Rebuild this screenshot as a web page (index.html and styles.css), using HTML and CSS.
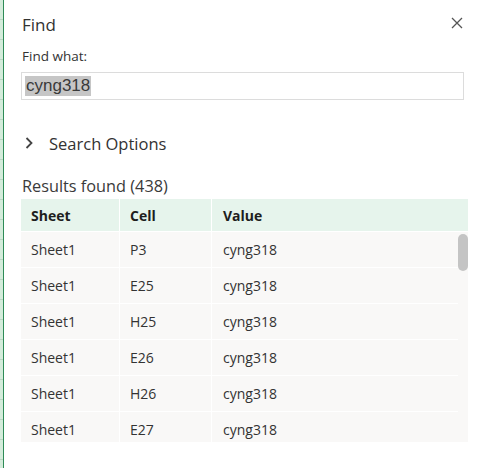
FILE: index.html
```html
<!DOCTYPE html>
<html>
<head>
<meta charset="utf-8">
<link rel="stylesheet" href="styles.css">
</head>
<body>
<div class="app">
  <div class="sheet-edge"></div>
  <div class="panel">
    <div class="title-row">
      <div class="title">Find</div>
      <button class="close" aria-label="Close">
        <svg width="12" height="12" viewBox="0 0 12 12"><path d="M1 1 L11 11 M11 1 L1 11" stroke="#555" stroke-width="1.3" fill="none"/></svg>
      </button>
    </div>
    <label class="label">Find what:</label>
    <div class="input"><span class="sel">cyng318</span></div>
    <div class="options">
      <svg class="chev" width="10" height="14" viewBox="0 0 10 14"><path d="M2.5 2 L7.5 7 L2.5 12" stroke="#444" stroke-width="1.8" fill="none"/></svg>
      <span>Search Options</span>
    </div>
    <div class="results-title">Results found (438)</div>
    <div class="table">
      <div class="row head">
        <div class="c c1">Sheet</div>
        <div class="c c2">Cell</div>
        <div class="c c3">Value</div>
      </div>
      <div class="body">
        <div class="rows">
          <div class="row"><div class="c c1">Sheet1</div><div class="c c2">P3</div><div class="c c3">cyng318</div></div>
          <div class="row"><div class="c c1">Sheet1</div><div class="c c2">E25</div><div class="c c3">cyng318</div></div>
          <div class="row"><div class="c c1">Sheet1</div><div class="c c2">H25</div><div class="c c3">cyng318</div></div>
          <div class="row"><div class="c c1">Sheet1</div><div class="c c2">E26</div><div class="c c3">cyng318</div></div>
          <div class="row"><div class="c c1">Sheet1</div><div class="c c2">H26</div><div class="c c3">cyng318</div></div>
          <div class="row"><div class="c c1">Sheet1</div><div class="c c2">E27</div><div class="c c3">cyng318</div></div>
        </div>
        <div class="thumb"></div>
      </div>
    </div>
  </div>
</div>
</body>
</html>
```
FILE: styles.css
```css
html, body {
  margin: 0;
  padding: 0;
  background: #fff;
}
body {
  font-family: "Open Sans", "Noto Sans", sans-serif;
  color: #242424;
}
.app {
  display: flex;
  width: 477px;
  height: 468px;
  overflow: hidden;
}
.sheet-edge {
  width: 3px;
  flex: none;
  background: repeating-linear-gradient(to bottom, #d4ecdb 0, #d4ecdb 19px, #b9d6c2 19px, #b9d6c2 20px);
  border-right: 1.5px solid #2e8b57;
}
.panel {
  flex: 1;
  padding: 0 9px 0 17px;
  display: flex;
  flex-direction: column;
}
.title-row {
  display: flex;
  justify-content: space-between;
  align-items: center;
  height: 24px;
  margin-top: 12px;
}
.title {
  font-size: 17px;
  color: #323232;
  padding-left: 1px;
}
.close {
  border: none;
  background: none;
  padding: 0;
  margin-right: 5px;
  margin-top: -3px;
  width: 12px;
  height: 12px;
  display: flex;
}
.label {
  font-size: 13.5px;
  margin-top: 11px;
  color: #333;
  padding-left: 1px;
  line-height: 18px;
}
.input {
  margin-top: 7px;
  box-sizing: border-box;
  width: 443px;
  height: 28px;
  border: 1px solid #dcdcdc;
  display: flex;
  align-items: center;
  padding-left: 3px;
}
.sel {
  font-family: "Liberation Sans", Arial, sans-serif;
  font-size: 17px;
  background: #c6c6c6;
  color: #3a3a3a;
  line-height: 20px;
  padding: 0 1px;
}
.options {
  display: flex;
  align-items: center;
  margin-top: 32px;
  height: 22px;
  font-size: 16.5px;
  color: #333;
}
.chev {
  margin-left: 3px;
  margin-right: 15px;
}
.results-title {
  margin-top: 21px;
  font-size: 16.3px;
  color: #3a3a3a;
  line-height: 22px;
  padding-left: 1px;
}
.table {
  margin-top: 2px;
  width: 447px;
  font-size: 14px;
  display: flex;
  flex-direction: column;
}
.row {
  display: flex;
  height: 36px;
  flex: none;
}
.row.head {
  height: 32px;
  background: #e6f4ec;
  font-weight: 700;
  color: #1e1e1e;
  border-bottom: 1px solid #fff;
}
.c {
  display: flex;
  align-items: center;
  padding-left: 10px;
  box-sizing: border-box;
}
.c1 { width: 99px; border-right: 1px solid #fff; }
.c2 { width: 92px; border-right: 1px solid #fff; padding-left: 10px; }
.c3 { flex: 1; padding-left: 11px; }
.body {
  height: 210px;
  overflow: hidden;
  display: flex;
  background: #f9f8f7;
}
.rows {
  flex: 1;
  display: flex;
  flex-direction: column;
}
.rows .row {
  border-bottom: 1px solid #fff;
  box-sizing: border-box;
  color: #333;
}
.thumb {
  width: 10px;
  height: 37px;
  margin-top: 2px;
  border-radius: 5px;
  background: #c4c4c4;
  flex: none;
}
```
